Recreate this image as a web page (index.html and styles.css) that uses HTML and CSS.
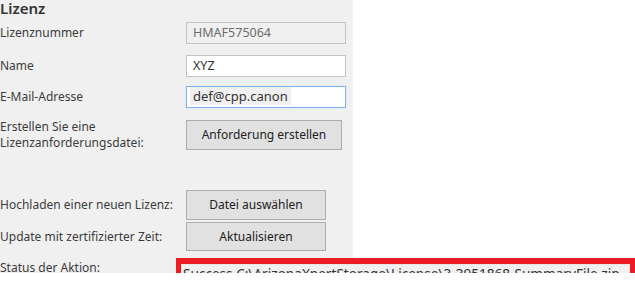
FILE: index.html
```html
<!DOCTYPE html>
<html>
	<head>
		<meta charset="utf-8">
		<title>Lizenz</title>
		<link rel="stylesheet" href="styles.css">
	</head>
	<body>
		<div class="panel">
			<h2>Lizenz</h2>
			<div class="row row1">
				<span class="label">Lizenznummer</span>
				<div class="field disabled">HMAF575064</div>
			</div>
			<div class="row row2">
				<span class="label">Name</span>
				<div class="field">XYZ</div>
			</div>
			<div class="row row3">
				<span class="label">E-Mail-Adresse</span>
				<div class="field focus"><span class="sel">def@cpp.canon</span></div>
			</div>
			<div class="row row4">
				<span class="label">Erstellen Sie eine<br>Lizenzanforderungsdatei:</span>
				<div class="btn wide">Anforderung erstellen</div>
			</div>
			<div class="row row5">
				<span class="label">Hochladen einer neuen Lizenz:</span>
				<div class="btn">Datei auswählen</div>
			</div>
			<div class="row row6">
				<span class="label">Update mit zertifizierter Zeit:</span>
				<div class="btn short">Aktualisieren</div>
			</div>
			<div class="row row7">
				<span class="label status_label">Status der Aktion:</span>
				<div class="status">
					<div class="status_txt">Success C:\ArizonaXpertStorage\License\3-3951868-SummaryFile.zip</div>
				</div>
			</div>
		</div>
	</body>
</html>
```

FILE: styles.css
```css
html,body{overflow:hidden;}
body,h2,div,span{margin:0; padding:0;}
body{ font-family:"Noto Sans","Open Sans",sans-serif;font-size: 12px;color: #3c3c3c;background: #fff;}
.panel{
	width:353px;
	height:273px;
	background: #f0f0f0;
}
h2{
	font-size: 15px;
	font-weight: 600;
	line-height: 16px;
	height: 16px;
	color: #333;
}
.row{
	display: flex;
	align-items: center;
}
.label{
	width:186px;
	flex-shrink: 0;
	line-height: 16px;
	white-space: nowrap;
}
.row1{margin-top: 6px;}
.row2{margin-top: 11px;}
.row3{margin-top: 9px;}
.row4{margin-top: 11px;}
.row5{margin-top: 39px;}
.row6{margin-top: 2px;}
.row7{margin-top: 7px;}
.field{
	width:160px;
	height:22px;
	box-sizing: border-box;
	border: 1px solid #c3c3c3;
	background: #fff;
	padding: 0 6px;
	line-height: 20px;
	font-size: 12.5px;
	color: #333;
}
.disabled{
	background: #f0f0f0;
	color: #6d6d6d;
}
.focus{
	border-color: #7eb4ea;
	box-shadow: 0 0 2px #cfe3f8;
	padding: 0 3px;
}
.sel{
	display: inline-block;
	background: #f0f0f0;
	padding: 0 3px;
	line-height: 18px;
	font-size: 13px;
}
.btn{
	width:140px;
	height:30px;
	box-sizing: border-box;
	border: 1px solid #adadad;
	background: #e1e1e1;
	text-align: center;
	line-height: 28px;
	font-size: 12px;
	color: #222;
}
.wide{width:156px;}
.short{height: 29px; line-height: 27px;}
.status_label{
	width:176px;
	align-self: flex-start;
	margin-top: 2px;
}
.status{
	width:459px;
	height:31px;
	box-sizing: border-box;
	border-style: solid;
	border-color: #ec1c24;
	border-width: 6px 5px;
	background: #fff;
	flex-shrink: 0;
}
.status_txt{
	height:19px;
	background: #f0f0f0;
	border: 1px solid #e6e6e6;
	box-sizing: border-box;
	line-height: 17px;
	padding-left: 1px;
	font-size: 13.6px;
	color: #333;
	white-space: nowrap;
}
```
